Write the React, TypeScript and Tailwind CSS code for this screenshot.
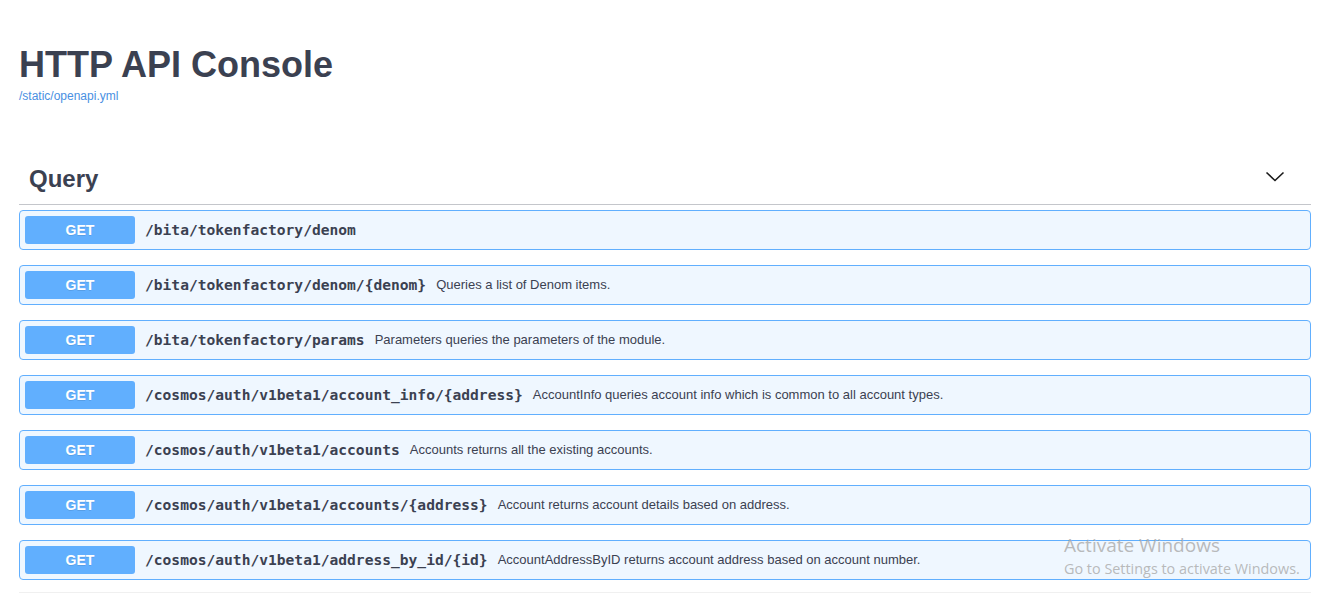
const endpoints: { path: string; summary?: string }[] = [
  { path: '/bita/tokenfactory/denom' },
  { path: '/bita/tokenfactory/denom/{denom}', summary: 'Queries a list of Denom items.' },
  { path: '/bita/tokenfactory/params', summary: 'Parameters queries the parameters of the module.' },
  {
    path: '/cosmos/auth/v1beta1/account_info/{address}',
    summary: 'AccountInfo queries account info which is common to all account types.',
  },
  { path: '/cosmos/auth/v1beta1/accounts', summary: 'Accounts returns all the existing accounts.' },
  {
    path: '/cosmos/auth/v1beta1/accounts/{address}',
    summary: 'Account returns account details based on address.',
  },
  {
    path: '/cosmos/auth/v1beta1/address_by_id/{id}',
    summary: 'AccountAddressByID returns account address based on account number.',
  },
];

function OperationRow({ path, summary }: { path: string; summary?: string }) {
  return (
    <div className="flex items-center rounded-[4px] border border-[#61affe] bg-[#eff7ff] p-[5px]">
      <span className="flex h-[28px] w-[110px] shrink-0 items-center justify-center rounded-[3px] bg-[#61affe] text-[14px] font-bold text-white [text-shadow:0_1px_0_rgba(0,0,0,0.1)]">
        GET
      </span>
      <span className="pl-[10px] pr-[10px] font-['DejaVu_Sans_Mono',monospace] text-[14.6px] font-bold text-[#3b4151]">
        {path}
      </span>
      {summary && <span className="text-[13px] text-[#3b4151]">{summary}</span>}
    </div>
  );
}

export default function App() {
  return (
    <div className="relative min-h-[594px] bg-white font-['Liberation_Sans',Arial,sans-serif] text-[#3b4151]">
      <div className="px-[19px] pt-[47px]">
        <h2 className="text-[36px] font-bold leading-[36px] text-[#3b4151]">HTTP API Console</h2>
        <a className="mt-[7px] block text-[12px] leading-[12px] text-[#4990e2]">/static/openapi.yml</a>

        <div className="mt-[65px] flex items-center justify-between border-b border-[#c4c6cb] pb-[13px] pl-[10px] pr-[26px]">
          <h3 className="text-[24px] font-bold leading-[24px] text-[#3b4151]">Query</h3>
          <svg width="20" height="20" viewBox="0 0 20 20" className="-mt-[4px]">
            <path d="M1.5 5.5 L10 13.5 L18.5 5.5" fill="none" stroke="#1a1a1a" strokeWidth="1.6" />
          </svg>
        </div>

        <div className="mt-[5px] flex flex-col gap-[15px] border-b border-[#f0f0f0] pb-[12px]">
          {endpoints.map((e) => (
            <OperationRow key={e.path} path={e.path} summary={e.summary} />
          ))}
        </div>
      </div>

      <div className="pointer-events-none absolute left-[1064px] top-[532px] font-['Open_Sans',sans-serif] text-[#a9a9a9]/80">
        <div className="text-[19px] leading-[26px]">Activate Windows</div>
        <div className="text-[14.4px] leading-[20px] mt-[1px]">Go to Settings to activate Windows.</div>
      </div>
    </div>
  );
}
